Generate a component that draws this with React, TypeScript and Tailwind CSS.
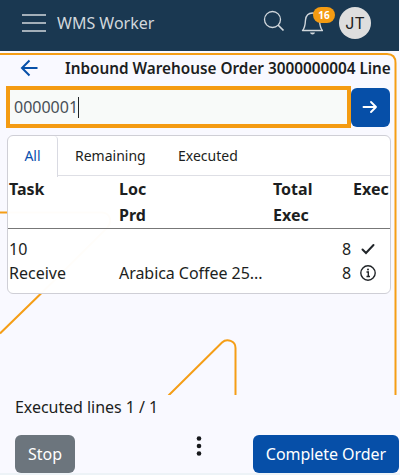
import React from 'react';

function Backdrop() {
  return (
    <svg className="pointer-events-none absolute left-0 top-[51px]" width="400" height="344" viewBox="0 51 400 344" fill="none" stroke="#f59e16" strokeWidth="2">
      <path d="M0 54H387Q395.5 54 395.5 63V395" />
      <path d="M0 212.500H101C110 212.500 113 221 107 228L40.500 294L0 333.500" />
      <path d="M168.500 395.500L222 342.500C227 338 235.500 341 235.500 348V395" />
    </svg>
  );
}

function Header() {
  return (
    <header className="flex h-[51px] w-[399px] shrink-0 items-start bg-[#1a3851] pl-[22px]">
      <svg className="mt-[13px]" width="24" height="20" fill="none" stroke="#a3afb9" strokeWidth="1.800">
        <path d="M0 2H24M0 10H24M0 18H24" />
      </svg>
      <span className="ml-[11px] mt-[11px] w-[100px] whitespace-nowrap text-base leading-6 text-[#d1d7dc]">WMS Worker</span>
      <svg className="ml-[106px] mt-[10px]" width="22" height="22" fill="none" stroke="#d1d7dc" strokeWidth="1.300">
        <circle cx="9.500" cy="9.500" r="8" />
        <path d="M15 15L20.500 20.500" strokeWidth="1.700" />
      </svg>
      <div className="relative ml-4 mt-[11px] h-6 w-[22px]">
        <svg width="22" height="24" fill="none" stroke="#d1d7dc" strokeWidth="1.400">
          <path d="M1.500 19.500C4 17 4.300 12.500 4.500 9C5 4.500 7.500 2 11.500 2S18 4.500 18.500 9C18.700 12.500 19 17 21.500 19.500Z" strokeLinejoin="round" />
          <path d="M9 21.500C9.500 24 13.500 24 14 21.500Z" fill="#d1d7dc" stroke="none" />
        </svg>
        <span className="absolute left-[12px] top-[-4px] flex h-4 w-[22px] items-center justify-center rounded-full bg-[#f49b12] text-[10px] font-bold text-white">16</span>
      </div>
      <div className="ml-4 mt-[7px] flex size-8 items-center justify-center rounded-full bg-[#dedede] font-['Inter',sans-serif] text-base text-[#222]">JT</div>
    </header>
  );
}

function Tabs() {
  return (
    <div className="flex h-[40px] text-sm leading-10">
      <div className="h-[41px] w-[50px] rounded-tl-[5px] rounded-tr border-r border-[#d9dae2] text-center text-[#0850ad]">All</div>
      <div className="w-[103px] border-b border-[#dedfe5] pl-[17px]">Remaining</div>
      <div className="flex-1 border-b border-[#dedfe5] pl-[17px]">Executed</div>
    </div>
  );
}

function TaskTable() {
  return (
    <div>
      <div className="grid h-[53px] grid-cols-[110px_154px_80px_1fr] border-b border-[#777] pl-px font-bold leading-[26px]">
        <div>Task</div>
        <div>Loc<br />Prd</div>
        <div>Total<br />Exec</div>
        <div className="whitespace-nowrap">Exec</div>
      </div>
      <div className="grid grid-cols-[110px_212px_18px_1fr] pl-px pt-2 leading-6">
        <div>10<br />Receive</div>
        <div className="tracking-[-0.05px]"><br />Arabica Coffee 25...</div>
        <div className="pl-[11px]">8<br />8</div>
        <div className="flex flex-col pl-[11px]">
          <svg className="mt-1" width="16" height="16" fill="none" stroke="#212529" strokeWidth="2" strokeLinecap="round">
            <path d="M2.500 8.500L6 12L13.500 4" />
          </svg>
          <svg className="mt-2" width="16" height="16" fill="none" stroke="#212529" strokeWidth="1.400">
            <circle cx="8" cy="8" r="7.200" />
            <path d="M6.500 7H8.300V11.500M6.500 11.500H10" />
            <circle cx="8" cy="4.500" r="1" fill="#212529" stroke="none" />
          </svg>
        </div>
      </div>
    </div>
  );
}

export default function App() {
  return (
    <div className="relative flex h-[475px] w-[400px] flex-col overflow-hidden bg-[#f9f9ff] font-['Noto_Sans',sans-serif] text-base text-[#1c1e21]">
      <Backdrop />
      <Header />
      <main className="relative flex flex-1 flex-col">
        <div className="flex h-[35px] items-start pl-5">
          <svg className="mt-[8px]" width="18" height="18" fill="none" stroke="#0750a8" strokeWidth="2">
            <path d="M17.500 9H2M9.500 1.500L2 9L9.500 16.500" />
          </svg>
          <h1 className="ml-[27px] mt-[5px] whitespace-nowrap text-[15.3px] font-semibold leading-6">Inbound Warehouse Order 3000000004 Line</h1>
        </div>
        <div className="ml-[6px] flex h-[42px] items-center">
          <div className="flex h-[42px] w-[345px] items-center border-4 border-[#f49b12] bg-[#f8faf9] pl-1 text-base text-[#495057]">
            0000001<span className="h-[21px] w-px bg-[#212529]" />
          </div>
          <button className="flex h-[39px] w-[39px] items-center justify-center rounded-md bg-[#064fa8]">
            <svg className="mr-px" width="16" height="16" fill="none" stroke="white" strokeWidth="1.900" strokeLinecap="round" strokeLinejoin="round">
              <path d="M1.500 8H14M9 3L14 8L9 13" />
            </svg>
          </button>
        </div>
        <section className="ml-[7px] mt-[7px] h-[159px] w-[384px] overflow-hidden rounded-md border border-[#cfcfd6] bg-white/98">
          <Tabs />
          <TaskTable />
        </section>
        <div className="ml-[15px] mt-[101px] leading-6 tracking-[-0.05px]">Executed lines 1 / 1</div>
        <div className="mt-4 flex h-[38px] items-start pl-[15px] text-white">
          <button className="h-[38px] w-[60px] rounded-md bg-[#6c757d]">Stop</button>
          <svg className="ml-[121px]" width="6" height="22" fill="#17191c">
            <circle cx="3" cy="3.500" r="2.300" />
            <circle cx="3" cy="11" r="2.300" />
            <circle cx="3" cy="18.500" r="2.300" />
          </svg>
          <button className="ml-[51px] h-[38px] w-[146px] whitespace-nowrap rounded-md bg-[#064fa8] tracking-[-0.05px]">Complete Order</button>
        </div>
      </main>
      <div className="h-[2px] w-full shrink-0 bg-[#edf3f7]" />
    </div>
  );
}
